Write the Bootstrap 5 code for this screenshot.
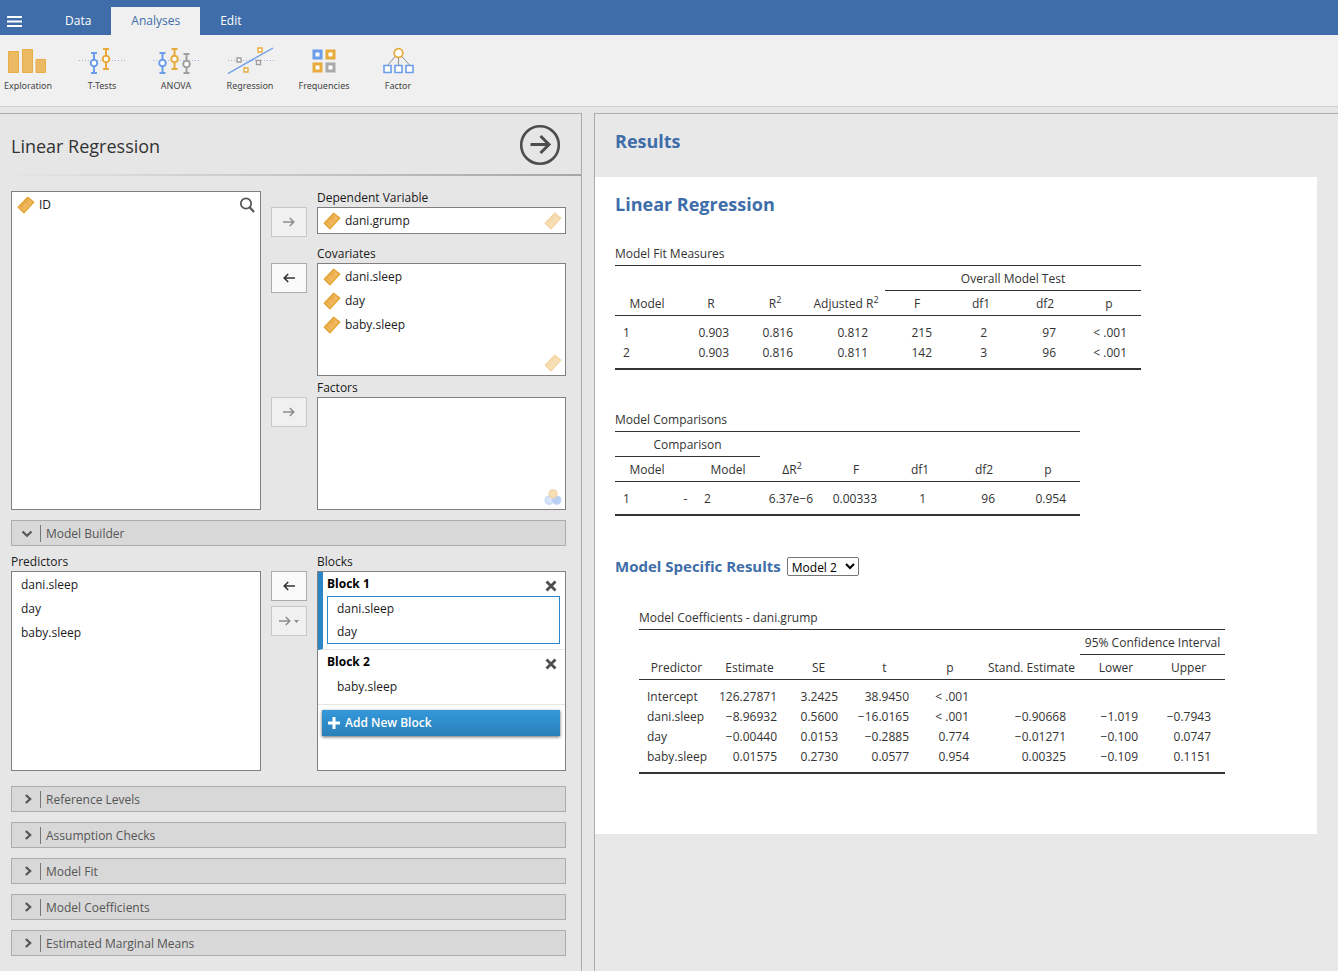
<!DOCTYPE html>
<html lang="en">
<head>
<meta charset="utf-8">
<meta name="viewport" content="width=device-width, initial-scale=1">
<title>Linear Regression</title>
<link href="https://cdn.jsdelivr.net/npm/bootstrap@5.3.0/dist/css/bootstrap.min.css" rel="stylesheet">
<style>
  :root { --brand: #3e6da9; --edge: #acacac; --box-edge: #808080; --ink: #333; }
  body { font-family: "Open Sans", "Noto Sans", sans-serif; font-size: 12px; line-height: 16px; color: #1a1a1a; background: #e6e6e6; }
  button { font-family: inherit; }
  ul { list-style: none; margin: 0; padding: 0; }

  .top-tabs { background: var(--brand); height: 35px; }
  .menu-button { width: 45px; height: 28px; padding: 0 0 2px 7px; border: 0; background: none; text-align: left; }
  .top-tabs .nav-link { height: 28px; padding: 0 20px; line-height: 28px; color: #fff; border-radius: 0; }
  .top-tabs .nav-link.active { background: #f0f0f0; color: var(--brand); }

  .ribbon { background: #f0f0f0; height: 72px; padding-top: 11px; gap: 18px; border-bottom: 1px solid #d0d0d0; }
  .ribbon-item { width: 56px; padding: 0; border: 0; background: none; font-family: "Noto Sans", sans-serif; font-size: 9px; line-height: 12px; color: #444; white-space: nowrap; }
  .ribbon-item svg { display: block; margin-bottom: 6px; }

  .workspace { display: grid; grid-template-columns: minmax(0, 582fr) minmax(0, 744fr); column-gap: 12px; padding-top: 6px; }
  .options-panel { border-top: 1px solid var(--edge); border-right: 1px solid var(--edge); }
  .options-head { height: 62px; padding: 0 20px 0 11px; border-bottom: 2px solid; border-image: linear-gradient(to right, #e6e6e6, #a6a6a6) 1; }
  .options-head h1 { font-size: 18px; line-height: 24px; margin: 4px 0 0; font-weight: 400; color: var(--ink); }
  .run-button { width: 42px; height: 42px; margin-top: 2px; padding: 0; border: 0; background: none; }
  .options-body { padding: 15px 15px 15px 11px; }

  .supplier { display: grid; grid-template-columns: minmax(0, 250fr) minmax(0, 295fr); column-gap: 10px; }
  .builder { margin-top: 9px; }
  .targets { display: flex; flex-direction: column; }
  .target-row { display: grid; grid-template-columns: 36px minmax(0, 1fr); column-gap: 10px; align-items: start; margin-bottom: 5px; }
  .target-row:first-child { margin-bottom: 10px; }
  .target-row:last-child { margin-bottom: 0; }
  .move-buttons { display: flex; flex-direction: column; gap: 5px; padding-top: 16px; }
  .field-name { line-height: 14px; height: 16px; }
  .var-box { background: #fff; border: 1px solid var(--box-edge); position: relative; }
  .var-list { padding-top: 1px; }
  .var-box li { height: 24px; line-height: 24px; display: flex; align-items: center; gap: 4px; padding-left: 5px; }
  .var-box.plain li { padding-left: 9px; }
  .box-single { height: 27px; }
  .box-multi { height: 113px; }
  .box-tall { height: 200px; }
  .box-full { height: 319px; }
  .type-hint { position: absolute; right: 3px; bottom: 3px; opacity: .45; }
  .search-button { position: absolute; top: 4px; right: 4px; width: 18px; height: 18px; padding: 0; border: 0; background: none; line-height: 0; }
  .move { width: 36px; height: 30px; padding: 0; display: flex; align-items: center; justify-content: center; border: 1px solid var(--edge); background: #fafafa; color: #333; }
  .move:disabled { border-color: #c8c8c8; background: #f0f0f0; color: #8c8c8c; }

  .section-bar { width: 100%; height: 26px; padding: 0 5px 0 8px; display: flex; align-items: center; border: 1px solid var(--edge); background: #d8d8d8; color: #555; text-align: left; }
  .section-bar span { border-left: 1px solid #777; line-height: 17px; padding-left: 5px; margin-left: 6px; }
  .section-bar.open { margin-top: 10px; }
  .sections { margin-top: 15px; row-gap: 10px; }

  .model-block { border-bottom: 1px solid #e6e6e6; padding: 4px 5px 5px 9px; }
  .model-block.selected { border-left: 5px solid #2a86c6; padding-left: 4px; }
  .block-name { font-weight: 700; color: #000; font-size: 12px; line-height: 16px; margin: 0; }
  .block-head { height: 20px; }
  .remove { width: 18px; height: 20px; border: 0; padding: 0; background: none; line-height: 0; }
  .block-terms { border: 1px solid transparent; }
  .selected .block-terms { border-color: #2a86c6; }
  .var-box .block-terms li { height: 23px; }
  .add-block { display: flex; align-items: center; gap: 5px; height: 26px; margin: 5px 5px 0 4px; padding: 0 6px; border: 0; color: #fff; font-weight: 600; background: linear-gradient(#3498db, #2a80b9); box-shadow: 0 1px 3px rgba(0,0,0,.6); }

  .results-panel { border-top: 1px solid var(--edge); border-left: 1px solid var(--edge); background: #e8e8e8; color: var(--ink); }
  .results-panel h1, .results-panel h2, .results-panel h3 { color: var(--brand); font-weight: 700; margin: 0; }
  .results-panel h1, .results-panel h2 { font-size: 18px; line-height: 24px; }
  .results-panel h3 { font-size: 15px; line-height: 20px; }
  .results-title { height: 63px; padding: 15px 20px; }
  .results-sheet { background: #fff; margin-right: 21px; padding: 15px 20px 60px; }
  .specific { gap: 6px; margin-top: 40px; }
  .model-select { height: 19px; width: 72px; border: 1px solid #767676; border-radius: 2px; background: #fff; font-family: inherit; font-size: 12px; line-height: 16px; padding: 0; color: #000; }

  .stats { table-layout: fixed; border-collapse: separate; border-spacing: 0; font-size: 12px; line-height: 20px; caption-side: top; white-space: nowrap; }
  .stats caption { padding: 0; color: var(--ink); line-height: 18px; height: 20px; }
  .stats th { font-weight: 400; text-align: center; padding: 2px 0 0; height: 25px; line-height: 22px; vertical-align: middle; }
  .stats thead tr:first-child th { border-top: 1px solid var(--ink); height: 26px; }
  .stats thead tr:last-child th, .stats .over { border-bottom: 1px solid var(--ink); }
  .stats tbody td { padding: 0 14px 0 0; text-align: right; height: 20px; }
  .stats tbody tr:first-child td { padding-top: 7px; }
  .stats tbody tr:last-child td { padding-bottom: 5px; border-bottom: 2px solid var(--ink); }
  .stats tbody td.name { text-align: left; padding-right: 0; padding-left: 8px; }
  .stats tbody td.dash { text-align: center; padding-right: 4px; }
  .stats tbody td.r8 { padding-right: 8px; }
  .stats tbody td.r11 { padding-right: 11px; }
  .stats tbody td.r17 { padding-right: 17px; }
  .stats tbody td.r21 { padding-right: 21px; }
  .stats tbody td.r26 { padding-right: 26px; }
  .stats sup { font-size: 9px; top: -5px; line-height: 0; }
  .w17 { width: 17px } .w64 { width: 64px } .w65 { width: 65px } .w66 { width: 66px } .w67 { width: 67px } .w71 { width: 71px }
  .w72 { width: 72px } .w73 { width: 73px } .w75 { width: 75px } .w78 { width: 78px } .w97 { width: 97px }
  .fit-table { width: 526px; margin-top: 29px; }
  .comp-table { width: 465px; margin-top: 41px; }
  .coef-table { width: 586px; margin: 33px 0 0 24px; }
</style>
</head>
<body>

<svg width="0" height="0" class="position-absolute" aria-hidden="true">
  <defs>
    <symbol id="ruler" viewBox="0 0 18 18">
      <path d="M1.2 11.2 L10.8 1.2 L16.8 6.2 L7 16.8 Z" fill="#f0b75a" stroke="#e3a02c" stroke-width="1.2" stroke-linejoin="round"/>
      <path d="M3.4 9.2l2.2 2M5.4 7.2l1.6 1.4M7.3 5.1l2.2 2M9.2 3.2l1.6 1.4" stroke="#d8901a" stroke-width="1" fill="none"/>
    </symbol>
    <symbol id="nominal" viewBox="0 0 18 18">
      <circle cx="5.2" cy="12.2" r="4.1" fill="#a4c4f2" stroke="#6b9de8"/>
      <circle cx="12.8" cy="12.2" r="4.1" fill="#5f97e6" stroke="#6b9de8"/>
      <circle cx="9" cy="5.8" r="4.1" fill="#f0b75a" stroke="#e3a02c"/>
    </symbol>
    <symbol id="arrow-r" viewBox="0 0 14 12">
      <path d="M1 6h11M7.8 2l4 4-4 4" fill="none" stroke="currentColor" stroke-width="1.5"/>
    </symbol>
    <symbol id="arrow-l" viewBox="0 0 14 12">
      <path d="M13 6H2M6.2 2l-4 4 4 4" fill="none" stroke="currentColor" stroke-width="1.6"/>
    </symbol>
    <symbol id="chev-r" viewBox="0 0 14 12">
      <path d="M5.800 2l4.400 4-4.400 4" fill="none" stroke="#555" stroke-width="2.2"/>
    </symbol>
    <symbol id="cross" viewBox="0 0 18 18">
      <path d="M4.5 4.5l9 9M13.5 4.5l-9 9" stroke="#4d4d4d" stroke-width="2.8"/>
    </symbol>
  </defs>
</svg>

<nav class="top-tabs d-flex align-items-end">
  <button class="menu-button" type="button" aria-label="Menu">
    <svg width="15" height="12" viewBox="0 0 15 12" aria-hidden="true"><path d="M0 2h15M0 6.5h15M0 11h15" stroke="#fff" stroke-width="2"/></svg>
  </button>
  <div class="nav">
    <a class="nav-link" href="#">Data</a>
    <a class="nav-link active" href="#" aria-current="page">Analyses</a>
    <a class="nav-link" href="#">Edit</a>
  </div>
</nav>

<div class="ribbon d-flex align-items-start">
  <button class="ribbon-item" type="button">
    <svg width="56" height="28" viewBox="0 0 56 28"><g fill="#ebba62" stroke="#e8ae45"><path d="M8.5 5.5h10v21h-10zM22.5 3.500h10v23h-10zM36 13.5h9.500v13H36z"/></g></svg>
    Exploration
  </button>
  <button class="ribbon-item" type="button">
    <svg width="56" height="28" viewBox="0 0 56 28"><path d="M5 14.5h46" stroke="#9fb4d6" stroke-dasharray="1 2"/><g fill="none" stroke-width="2"><g stroke="#6b9de8"><path d="M17 7h6M17 27h6M20 7v20"/><circle cx="20" cy="17" r="3.3" fill="#fff"/></g><g stroke="#e8ab3b"><path d="M29 3h6M29 23h6M32 3v20"/><circle cx="32" cy="13" r="3.3" fill="#fff"/></g></g></svg>
    T-Tests
  </button>
  <button class="ribbon-item" type="button">
    <svg width="56" height="28" viewBox="0 0 56 28"><path d="M5 14.5h46" stroke="#9fb4d6" stroke-dasharray="1 2"/><g fill="none" stroke-width="2"><g stroke="#6b9de8"><path d="M11.5 7h6M11.5 27h6M14.5 7v20"/><circle cx="14.5" cy="17" r="3.3" fill="#fff"/></g><g stroke="#e8ab3b"><path d="M23.5 3h6M23.5 23h6M26.5 3v20"/><circle cx="26.5" cy="13" r="3.3" fill="#fff"/></g><g stroke="#9f9f9f"><path d="M35.5 8h6M35.5 27h6M38.5 8v19"/><circle cx="38.5" cy="18" r="3.3" fill="#fff"/></g></g></svg>
    ANOVA
  </button>
  <button class="ribbon-item" type="button">
    <svg width="56" height="28" viewBox="0 0 56 28"><path d="M6 14.5h46" stroke="#9fb4d6" stroke-dasharray="1 2"/><path d="M6 27.5L51 2" stroke="#6b9de8" stroke-width="1.4"/><g fill="#fff" stroke-width="1.4"><path d="M36 2h4v4h-4zM22 22h4v4h-4z" stroke="#e8ab3b"/><path d="M15 12h4v4h-4zM34.5 14.5h4v4h-4z" stroke="#9f9f9f"/></g></svg>
    Regression
  </button>
  <button class="ribbon-item" type="button">
    <svg width="56" height="28" viewBox="0 0 56 28"><g fill="#fff" stroke-width="3"><path d="M18 5h7v7h-7z" stroke="#6b9de8"/><path d="M31 5h7v7h-7zM18 18h7v7h-7z" stroke="#e8ab3b"/><path d="M31 18h7v7h-7z" stroke="#a9a9a9"/></g></svg>
    Frequencies
  </button>
  <button class="ribbon-item" type="button">
    <svg width="56" height="28" viewBox="0 0 56 28"><path d="M25.5 10L18 19M28.5 11v8M31.5 10l8 9" stroke="#8f8f8f"/><circle cx="28.5" cy="7" r="4.3" fill="#fff" stroke="#e8ab3b" stroke-width="1.7"/><path d="M14 19.5h7v7h-7zM25 19.5h7v7h-7zM36 19.5h7v7h-7z" fill="#fff" stroke="#6b9de8" stroke-width="1.6"/></svg>
    Factor
  </button>
</div>

<div class="workspace">
  <section class="options-panel">
    <header class="options-head d-flex align-items-center justify-content-between">
      <h1>Linear Regression</h1>
      <button class="run-button" type="button" aria-label="Hide options">
        <svg width="42" height="42" viewBox="0 0 42 42"><circle cx="21" cy="21" r="18.800" fill="none" stroke="#4d4d4d" stroke-width="2.600"/><path d="M11.500 20.500h18M21.500 12l8.500 8.500-8.500 8.500" fill="none" stroke="#4d4d4d" stroke-width="3"/></svg>
      </button>
    </header>

    <div class="options-body">
      <div class="supplier">
        <div class="var-box box-full">
          <ul class="var-list"><li><svg width="18" height="18"><use href="#ruler"/></svg>ID</li></ul>
          <button class="search-button" type="button" aria-label="Search"><svg width="18" height="18" viewBox="0 0 18 18"><circle cx="8" cy="7.5" r="5.2" fill="none" stroke="#555" stroke-width="1.7"/><path d="M11.7 11.3l4.300 4.700" stroke="#555" stroke-width="2.2"/></svg></button>
        </div>
        <div class="targets">
          <div class="target-row">
            <div class="move-buttons"><button class="move" type="button" disabled aria-label="Assign"><svg width="14" height="12"><use href="#arrow-r"/></svg></button></div>
            <div>
              <div class="field-name">Dependent Variable</div>
              <div class="var-box box-single"><ul class="var-list"><li><svg width="18" height="18"><use href="#ruler"/></svg>dani.grump</li></ul><svg class="type-hint" width="18" height="18"><use href="#ruler"/></svg></div>
            </div>
          </div>
          <div class="target-row">
            <div class="move-buttons"><button class="move" type="button" aria-label="Remove"><svg width="14" height="12"><use href="#arrow-l"/></svg></button></div>
            <div>
              <div class="field-name">Covariates</div>
              <div class="var-box box-multi"><ul class="var-list"><li><svg width="18" height="18"><use href="#ruler"/></svg>dani.sleep</li><li><svg width="18" height="18"><use href="#ruler"/></svg>day</li><li><svg width="18" height="18"><use href="#ruler"/></svg>baby.sleep</li></ul><svg class="type-hint" width="18" height="18"><use href="#ruler"/></svg></div>
            </div>
          </div>
          <div class="target-row">
            <div class="move-buttons"><button class="move" type="button" disabled aria-label="Assign"><svg width="14" height="12"><use href="#arrow-r"/></svg></button></div>
            <div>
              <div class="field-name">Factors</div>
              <div class="var-box box-multi"><svg class="type-hint" width="18" height="18"><use href="#nominal"/></svg></div>
            </div>
          </div>
        </div>
      </div>

      <button class="section-bar open" type="button" aria-expanded="true"><svg width="14" height="12" viewBox="0 0 14 12"><path d="M2.5 4.500l4.500 4.200 4.500-4.200" fill="none" stroke="#555" stroke-width="2.2"/></svg><span>Model Builder</span></button>

      <div class="supplier builder">
        <div>
          <div class="field-name">Predictors</div>
          <div class="var-box plain box-tall"><ul class="var-list"><li>dani.sleep</li><li>day</li><li>baby.sleep</li></ul></div>
        </div>
        <div class="target-row">
          <div class="move-buttons">
            <button class="move" type="button" aria-label="Remove"><svg width="14" height="12"><use href="#arrow-l"/></svg></button>
            <button class="move" type="button" disabled aria-label="Assign"><svg width="22" height="12" viewBox="0 0 22 12"><path d="M1 6h11M7.8 2l4 4-4 4" fill="none" stroke="currentColor" stroke-width="1.5"/><path d="M16 5h5l-2.5 3z" fill="currentColor"/></svg></button>
          </div>
          <div>
            <div class="field-name">Blocks</div>
            <div class="var-box plain box-tall d-flex flex-column">
              <div class="model-block selected">
                <div class="block-head d-flex justify-content-between"><h2 class="block-name">Block 1</h2><button class="remove" type="button" aria-label="Remove Block 1"><svg width="18" height="18"><use href="#cross"/></svg></button></div>
                <ul class="block-terms"><li>dani.sleep</li><li>day</li></ul>
              </div>
              <div class="model-block">
                <div class="block-head d-flex justify-content-between"><h2 class="block-name">Block 2</h2><button class="remove" type="button" aria-label="Remove Block 2"><svg width="18" height="18"><use href="#cross"/></svg></button></div>
                <ul class="block-terms"><li>baby.sleep</li></ul>
              </div>
              <button class="add-block" type="button"><svg width="12" height="12" viewBox="0 0 12 12"><path d="M6 0v12M0 6h12" stroke="#fff" stroke-width="3"/></svg>Add New Block</button>
            </div>
          </div>
        </div>
      </div>

      <div class="d-grid sections">
        <button class="section-bar" type="button" aria-expanded="false"><svg width="14" height="12"><use href="#chev-r"/></svg><span>Reference Levels</span></button>
        <button class="section-bar" type="button" aria-expanded="false"><svg width="14" height="12"><use href="#chev-r"/></svg><span>Assumption Checks</span></button>
        <button class="section-bar" type="button" aria-expanded="false"><svg width="14" height="12"><use href="#chev-r"/></svg><span>Model Fit</span></button>
        <button class="section-bar" type="button" aria-expanded="false"><svg width="14" height="12"><use href="#chev-r"/></svg><span>Model Coefficients</span></button>
        <button class="section-bar" type="button" aria-expanded="false"><svg width="14" height="12"><use href="#chev-r"/></svg><span>Estimated Marginal Means</span></button>
      </div>
    </div>
  </section>

  <main class="results-panel">
    <div class="results-title"><h1>Results</h1></div>
    <div class="results-sheet">
      <h2>Linear Regression</h2>

      <table class="stats fit-table">
        <caption>Model Fit Measures</caption>
        <colgroup><col class="w64"><col class="w64"><col class="w64"><col class="w78"><col class="w64"><col class="w64"><col class="w64"><col class="w64"></colgroup>
        <thead>
          <tr><th colspan="4"></th><th colspan="4" class="over">Overall Model Test</th></tr>
          <tr><th>Model</th><th>R</th><th>R<sup>2</sup></th><th>Adjusted R<sup>2</sup></th><th>F</th><th>df1</th><th>df2</th><th>p</th></tr>
        </thead>
        <tbody>
          <tr><td class="name">1</td><td>0.903</td><td>0.816</td><td class="r17">0.812</td><td class="r17">215</td><td class="r26">2</td><td class="r21">97</td><td>&lt; .001</td></tr>
          <tr><td class="name">2</td><td>0.903</td><td>0.816</td><td class="r17">0.811</td><td class="r17">142</td><td class="r26">3</td><td class="r21">96</td><td>&lt; .001</td></tr>
        </tbody>
      </table>

      <table class="stats comp-table">
        <caption>Model Comparisons</caption>
        <colgroup><col class="w64"><col class="w17"><col class="w64"><col class="w64"><col class="w64"><col class="w64"><col class="w64"><col class="w64"></colgroup>
        <thead>
          <tr><th colspan="3" class="over">Comparison</th><th colspan="5"></th></tr>
          <tr><th>Model</th><th></th><th>Model</th><th>ΔR<sup>2</sup></th><th>F</th><th>df1</th><th>df2</th><th>p</th></tr>
        </thead>
        <tbody>
          <tr><td class="name">1</td><td class="dash">-</td><td class="name">2</td><td class="r11">6.37e−6</td><td class="r11">0.00333</td><td class="r26">1</td><td class="r21">96</td><td>0.954</td></tr>
        </tbody>
      </table>

      <div class="specific d-flex align-items-center">
        <h3><label for="model">Model Specific Results</label></h3>
        <select id="model" class="model-select"><option>Model 1</option><option selected>Model 2</option></select>
      </div>

      <table class="stats coef-table">
        <caption>Model Coefficients - dani.grump</caption>
        <colgroup><col class="w75"><col class="w71"><col class="w67"><col class="w65"><col class="w66"><col class="w97"><col class="w72"><col class="w73"></colgroup>
        <thead>
          <tr><th colspan="6"></th><th colspan="2" class="over">95% Confidence Interval</th></tr>
          <tr><th>Predictor</th><th>Estimate</th><th>SE</th><th>t</th><th>p</th><th>Stand. Estimate</th><th>Lower</th><th>Upper</th></tr>
        </thead>
        <tbody>
          <tr><td class="name">Intercept</td><td class="r8">126.27871</td><td>3.2425</td><td class="r8">38.9450</td><td>&lt; .001</td><td></td><td></td><td></td></tr>
          <tr><td class="name">dani.sleep</td><td class="r8">−8.96932</td><td>0.5600</td><td class="r8">−16.0165</td><td>&lt; .001</td><td>−0.90668</td><td>−1.019</td><td>−0.7943</td></tr>
          <tr><td class="name">day</td><td class="r8">−0.00440</td><td>0.0153</td><td class="r8">−0.2885</td><td>0.774</td><td>−0.01271</td><td>−0.100</td><td>0.0747</td></tr>
          <tr><td class="name">baby.sleep</td><td class="r8">0.01575</td><td>0.2730</td><td class="r8">0.0577</td><td>0.954</td><td>0.00325</td><td>−0.109</td><td>0.1151</td></tr>
        </tbody>
      </table>
    </div>
  </main>
</div>

<script src="https://cdn.jsdelivr.net/npm/bootstrap@5.3.0/dist/js/bootstrap.bundle.min.js"></script>
</body>
</html>
